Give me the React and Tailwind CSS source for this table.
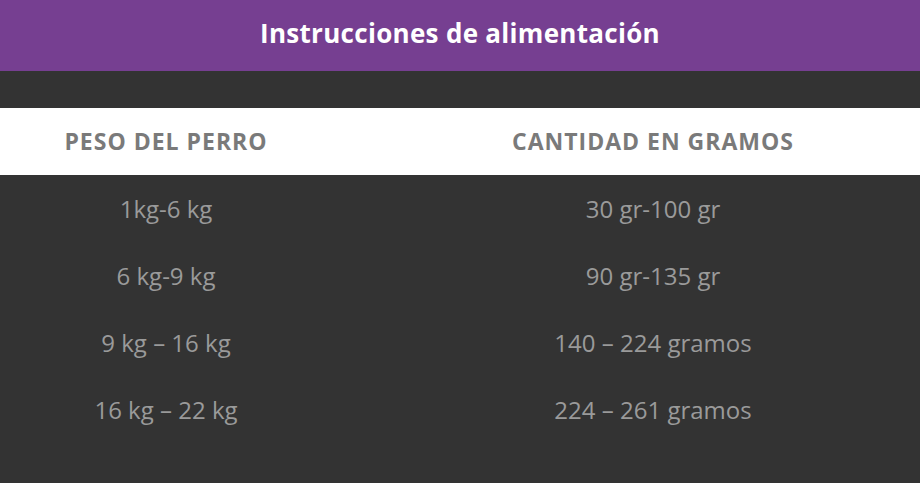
import React from 'react';

const rows = [
  ['1kg-6 kg', '30 gr-100 gr'],
  ['6 kg-9 kg', '90 gr-135 gr'],
  ['9 kg – 16 kg', '140 – 224 gramos'],
  ['16 kg – 22 kg', '224 – 261 gramos'],
];

export default function App() {
  return (
    <div className="w-[920px] h-[483px] bg-[#333333] overflow-hidden" style={{ fontFamily: '"Open Sans", "Noto Sans", sans-serif' }}>
      <div className="h-[71px] bg-[#763f91] flex items-center justify-center pb-[4px]">
        <h1 className="text-white font-bold text-[26px] tracking-[0.3px]">Instrucciones de alimentación</h1>
      </div>

      <div className="mt-[37px]">
        <div className="h-[67px] bg-white flex items-center text-[#7a7a7a] font-bold text-[23px] tracking-[1px]">
          <div className="w-[332px] text-center">PESO DEL PERRO</div>
          <div className="flex-1 pl-[54px] text-center">CANTIDAD EN GRAMOS</div>
        </div>
        {rows.map(([peso, cantidad]) => (
          <div key={peso} className="h-[67px] flex items-center text-[#9a9a9a] text-[24px]">
            <div className="w-[332px] text-center">{peso}</div>
            <div className="flex-1 pl-[54px] text-center">{cantidad}</div>
          </div>
        ))}
      </div>
    </div>
  );
}
